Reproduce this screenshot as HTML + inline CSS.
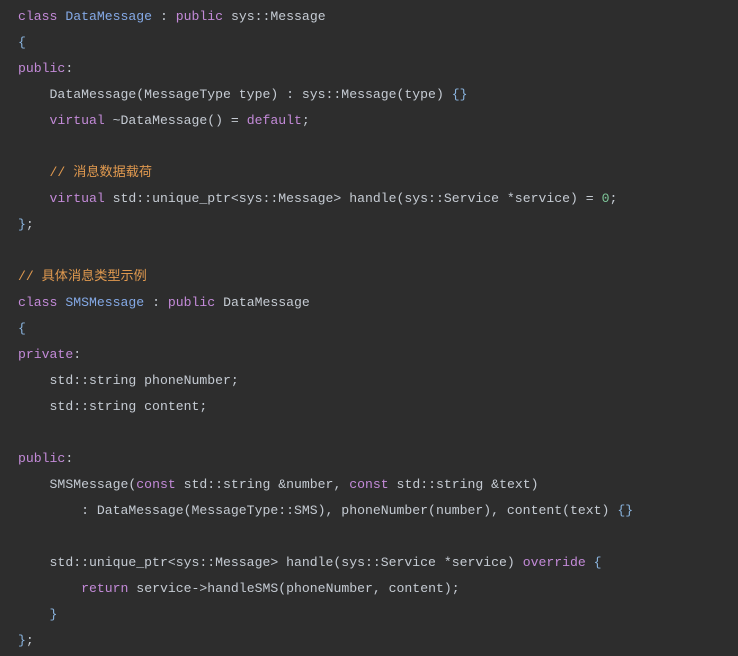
<!DOCTYPE html>
<html><head><meta charset="utf-8"><style>
html,body{margin:0;padding:0;background:#2d2d2d;}
body{width:738px;height:656px;overflow:hidden;}
pre{margin:0;padding:4px 0 0 18px;font-family:"Liberation Mono","Noto Sans CJK SC",monospace;font-size:13.15px;line-height:26px;color:#c5cbd3;white-space:pre;}
.k{color:#c38ad8}.c{color:#84a9e6}.m{color:#e0994f}.n{color:#7ec699}.b{color:#8ab4de}
</style></head><body><pre><span class="k">class</span> <span class="c">DataMessage</span> : <span class="k">public</span> sys::Message
<span class="b">{</span>
<span class="k">public</span>:
    DataMessage(MessageType type) : sys::Message(type) <span class="b">{}</span>
    <span class="k">virtual</span> ~DataMessage() = <span class="k">default</span>;

    <span class="m">// 消息数据载荷</span>
    <span class="k">virtual</span> std::unique_ptr&lt;sys::Message&gt; handle(sys::Service *service) = <span class="n">0</span>;
<span class="b">}</span>;

<span class="m">// 具体消息类型示例</span>
<span class="k">class</span> <span class="c">SMSMessage</span> : <span class="k">public</span> DataMessage
<span class="b">{</span>
<span class="k">private</span>:
    std::string phoneNumber;
    std::string content;

<span class="k">public</span>:
    SMSMessage(<span class="k">const</span> std::string &amp;number, <span class="k">const</span> std::string &amp;text)
        : DataMessage(MessageType::SMS), phoneNumber(number), content(text) <span class="b">{}</span>

    std::unique_ptr&lt;sys::Message&gt; handle(sys::Service *service) <span class="k">override</span> <span class="b">{</span>
        <span class="k">return</span> service-&gt;handleSMS(phoneNumber, content);
    <span class="b">}</span>
<span class="b">}</span>;
</pre></body></html>
